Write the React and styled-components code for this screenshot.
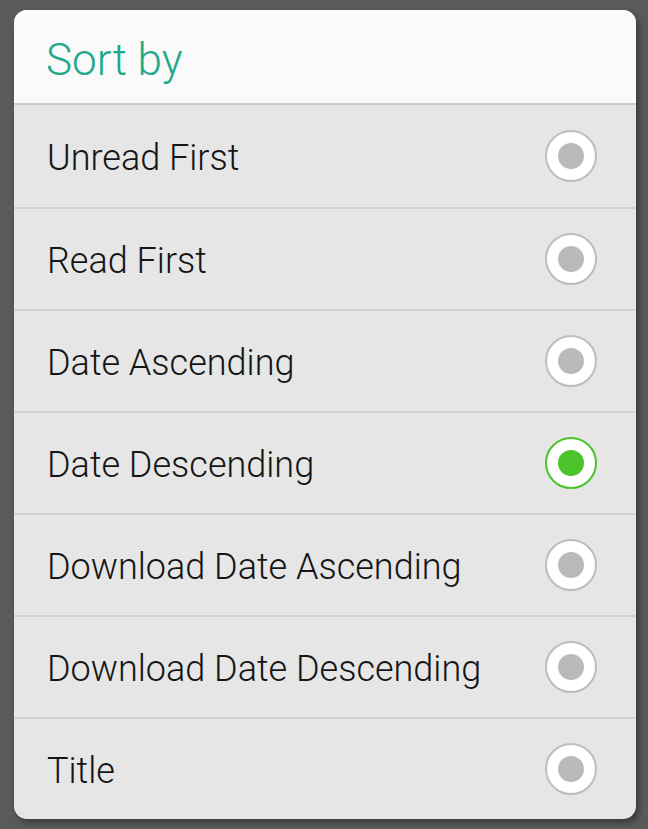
import React, { useState } from 'react';
import styled, { createGlobalStyle } from 'styled-components';

const options = [
    'Unread First',
    'Read First',
    'Date Ascending',
    'Date Descending',
    'Download Date Ascending',
    'Download Date Descending',
    'Title',
];

const GlobalStyle = createGlobalStyle`
    html, body {
        margin: 0;
        padding: 0;
        background: #5a5a5a;
    }
    body {
        font-family: Roboto, "Noto Sans", "Liberation Sans", sans-serif;
    }
`;

const Screen = styled.div`
    box-sizing: border-box;
    width: 648px;
    height: 829px;
    padding: 10px 12px 0 14px;
    background: #5a5a5a;
`;

const Dialog = styled.div`
    width: 622px;
    border-radius: 13px;
    overflow: hidden;
    background: #e6e6e6;
    box-shadow: 3px 4px 6px rgba(0, 0, 0, 0.35);
`;

const Header = styled.div`
    box-sizing: border-box;
    height: 95px;
    display: flex;
    align-items: center;
    padding: 6px 0 0 32px;
    background: #fafafa;
    border-bottom: 2px solid #cbcbcb;
    color: #22a88a;
    font-size: 44px;
    font-weight: 300;
`;

const Row = styled.div`
    box-sizing: border-box;
    height: 102px;
    display: flex;
    align-items: center;
    justify-content: space-between;
    padding: 0 39px 0 33px;
    border-top: ${p => (p.first ? 'none' : '2px solid #d2d2d2')};
    cursor: pointer;
`;

const Label = styled.span`
    padding-top: 4px;
    color: #151515;
    font-size: 36px;
    font-weight: 300;
`;

const Radio = styled.span`
    box-sizing: border-box;
    width: 52px;
    height: 52px;
    border-radius: 50%;
    background: #fff;
    border: 2px solid ${p => (p.checked ? '#4cc32a' : '#bdbdbd')};
    display: flex;
    align-items: center;
    justify-content: center;
    &::after {
        content: '';
        width: 26px;
        height: 26px;
        border-radius: 50%;
        background: ${p => (p.checked ? '#4cc32a' : '#bababa')};
    }
`;

function App() {
    const [selected, setSelected] = useState('Date Descending');
    return (
        <Screen>
            <GlobalStyle />
            <Dialog>
                <Header>Sort by</Header>
                {options.map((o, i) => (
                    <Row key={o} first={i === 0} onClick={() => setSelected(o)}>
                        <Label>{o}</Label>
                        <Radio checked={selected === o} />
                    </Row>
                ))}
            </Dialog>
        </Screen>
    );
}

export default App;
